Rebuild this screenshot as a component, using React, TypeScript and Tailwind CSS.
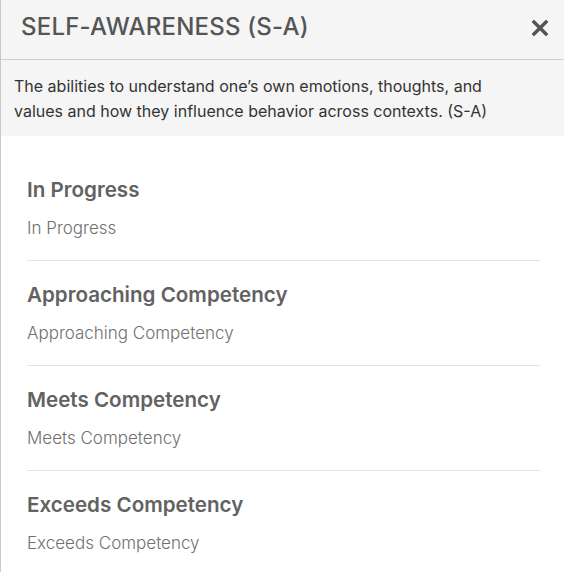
import React from "react";

const levels = [
  "In Progress",
  "Approaching Competency",
  "Meets Competency",
  "Exceeds Competency",
];

function CloseIcon() {
  return (
    <svg width="16" height="16" viewBox="0 0 16 16" aria-hidden="true">
      <path
        d="M2 2 L14 14 M14 2 L2 14"
        stroke="#555555"
        strokeWidth="3.4"
        strokeLinecap="square"
        fill="none"
      />
    </svg>
  );
}

export default function App() {
  return (
    <div
      className="w-[564px] h-[572px] bg-white border-l border-[#c8c8c8] overflow-hidden"
      style={{ fontFamily: "Inter, 'Noto Sans', sans-serif" }}
    >
      <div className="h-[60px] bg-[#f5f5f5] border-b border-[#cfcfcf] flex items-start justify-between pl-5 pr-4 pt-[13px]">
        <h1 className="text-[24px] leading-[28px] tracking-[0.2px] font-medium text-[#555555]">
          SELF-AWARENESS (S-A)
        </h1>
        <button className="mt-[7px]">
          <CloseIcon />
        </button>
      </div>
      <div className="bg-[#f5f5f5] pl-[13px] pr-[44px] pt-[14px] pb-[12px]">
        <p className="text-[16px] leading-[25px] text-[#333333]">
          The abilities to understand one’s own emotions, thoughts, and values
          and how they influence behavior across contexts. (S-A)
        </p>
      </div>
      <div className="pl-[26px] pr-[24px] pt-5">
        {levels.map((level, i) => (
          <div
            key={level}
            className={
              i < levels.length - 1
                ? "pt-5 pb-5 border-b border-[#e3e3e3]"
                : "pt-5 pb-5"
            }
          >
            <h2 className="text-[20.6px] leading-7 font-semibold text-[#626262]">
              {level}
            </h2>
            <p className="mt-3 text-[17px] leading-6 font-light text-[#707070]">
              {level}
            </p>
          </div>
        ))}
      </div>
    </div>
  );
}
